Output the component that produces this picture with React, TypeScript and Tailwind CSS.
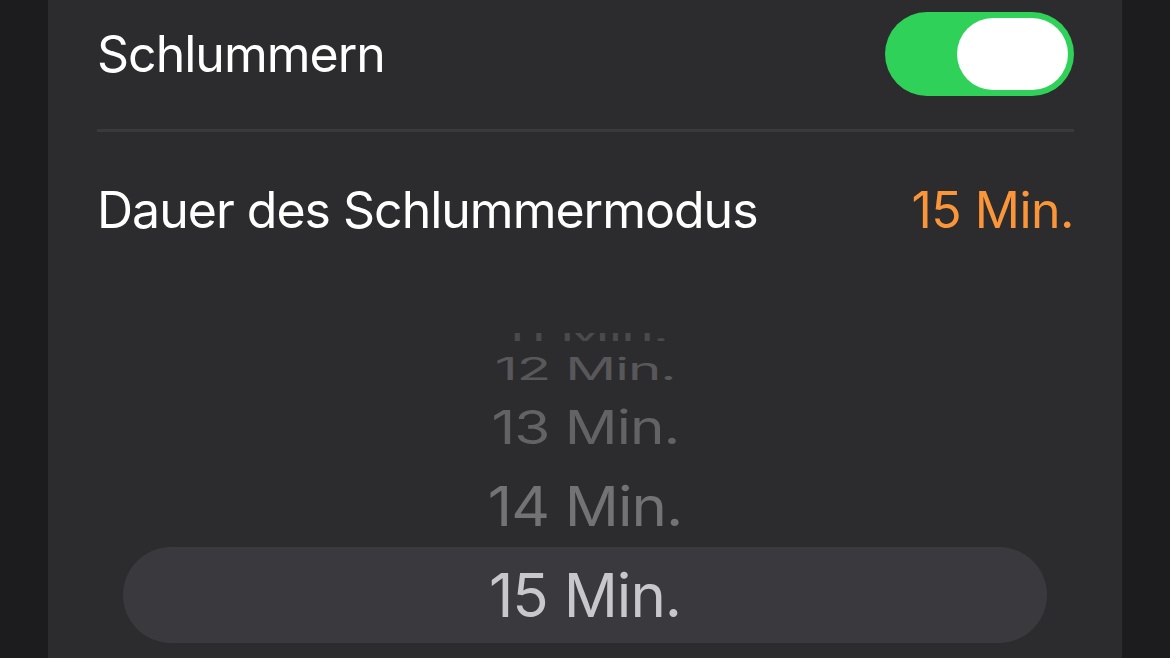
export default function App() {
  const font = { fontFamily: 'Inter, "Noto Sans", sans-serif' }

  return (
    <div className="flex h-[658px] w-full overflow-hidden bg-[#1c1c1e]" style={font}>
      <div className="mx-[48px] flex flex-1 flex-col bg-[#2c2c2e] pl-[49px] pr-[48px]">
        {/* Schlummern toggle row */}
        <div className="flex items-center justify-between pb-[33px] pt-[12px]">
          <span className="text-[50px] leading-none tracking-[-1px] text-white">Schlummern</span>
          <div className="flex h-[84px] w-[189px] items-center justify-end rounded-full bg-[#30d158] pr-[6px]">
            <div className="h-[72px] w-[111px] rounded-full bg-white" />
          </div>
        </div>
        <div className="h-[3px] bg-[#3a3a3c]" />

        {/* Duration row */}
        <div className="flex h-[156px] items-center justify-between">
          <span className="text-[50px] leading-none tracking-[-1px] text-white">Dauer des Schlummermodus</span>
          <span className="text-[50px] leading-none tracking-[-0.5px] text-[#fa953a]">15 Min.</span>
        </div>

        {/* Picker wheel */}
        <div className="-ml-[49px] -mr-[48px] mt-[45px] flex h-[325px] flex-col justify-end overflow-hidden">
          <div className="flex h-[30px] shrink-0 items-center justify-center">
            <span className="scale-x-[0.92] scale-y-[0.35] text-[60px] leading-none tracking-[-1px] text-[#4a4a4c]">11 Min.</span>
          </div>
          <div className="flex h-[41px] shrink-0 items-center justify-center">
            <span className="scale-x-[0.94] scale-y-[0.51] text-[60px] leading-none tracking-[-1px] text-[#58585a]">12 Min.</span>
          </div>
          <div className="flex h-[75px] shrink-0 items-center justify-center">
            <span className="scale-x-[0.975] scale-y-[0.78] text-[60px] leading-none tracking-[-1px] text-[#636365]">13 Min.</span>
          </div>
          <div className="flex h-[83px] shrink-0 items-center justify-center">
            <span className="scale-y-[0.91] text-[60px] leading-none tracking-[-1px] text-[#737375]">14 Min.</span>
          </div>
          <div className="mx-[75px] flex h-[96px] shrink-0 items-center justify-center rounded-full bg-[#3a3a3e]">
            <span className="text-[60px] leading-none tracking-[-1px] text-[#c8c8cc]">15 Min.</span>
          </div>
          <div className="h-[15px] shrink-0" />
        </div>
      </div>
    </div>
  )
}
